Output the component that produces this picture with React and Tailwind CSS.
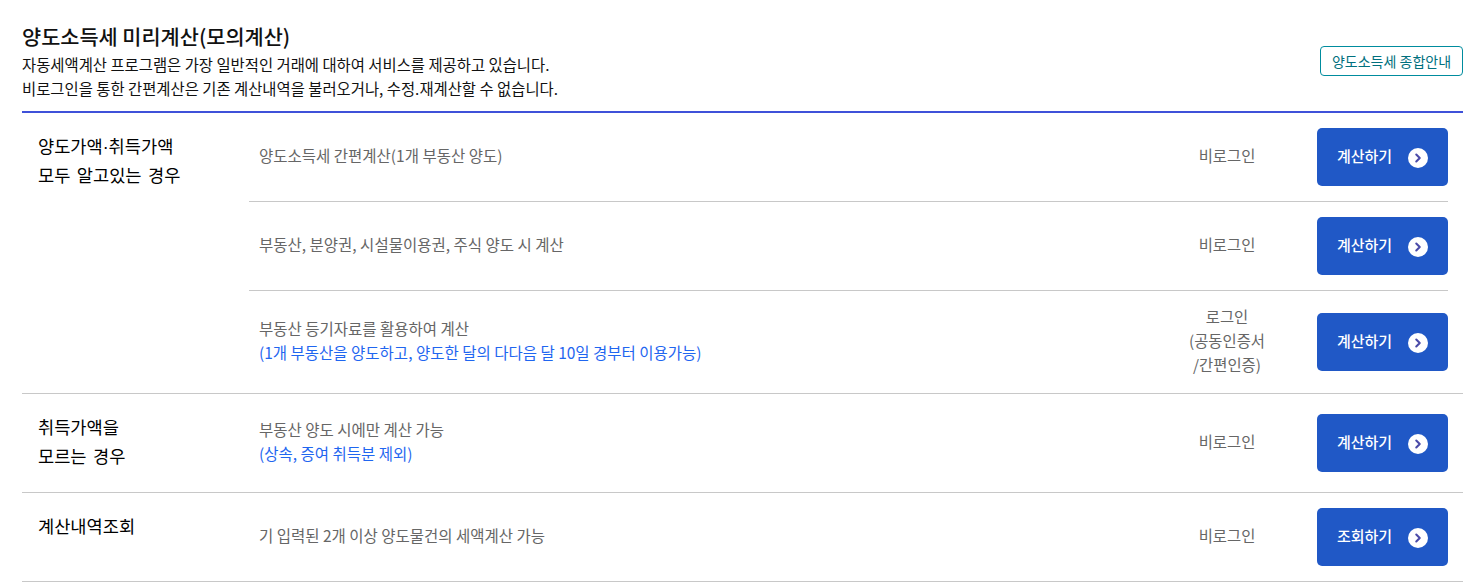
import { ChevronRight } from "lucide-react";

const font = { fontFamily: '"Noto Sans CJK KR", "Noto Sans", sans-serif' };

function ActionRow({ desc, note, login, label = "계산하기", className = "" }) {
  return (
    <div className={`flex items-center ${className}`}>
      <div className="flex-1 pl-[10px] -translate-y-[2px] text-[15.5px] leading-[24px] text-[#666666]">
        <p>{desc}</p>
        {note && <p className="text-[#1f66f0]">{note}</p>}
      </div>
      <div className="w-[100px] mr-[40px] -translate-y-[2px] text-center text-[15.4px] leading-[24px] text-[#666666]">
        {login}
      </div>
      <a className="flex items-center justify-center gap-[16px] w-[131px] h-[58px] rounded-[5px] bg-[#2058c6] text-[15px] font-medium text-white">
        <span className="pb-[2px]">{label}</span>
        <span className="flex items-center justify-center w-[20px] h-[20px] rounded-full bg-white mt-[1px]">
          <ChevronRight className="w-[14px] h-[14px] text-[#4a4aa8]" strokeWidth={3.5} />
        </span>
      </a>
    </div>
  );
}

export default function App() {
  return (
    <div className="min-h-[582px] bg-white pl-[22px] pr-[16px] pt-[21px]" style={font}>
      <div className="flex items-start justify-between h-[90px] border-b-2 border-[#3f51d9] box-content">
        <div>
          <h2 className="text-[20.8px] leading-[30px] font-medium text-[#111111]">양도소득세 미리계산(모의계산)</h2>
          <p className="mt-[1px] text-[15.4px] leading-[24px] text-[#111111]">자동세액계산 프로그램은 가장 일반적인 거래에 대하여 서비스를 제공하고 있습니다.</p>
          <p className="text-[15.4px] leading-[24px] text-[#111111]">비로그인을 통한 간편계산은 기존 계산내역을 불러오거나, 수정.재계산할 수 없습니다.</p>
        </div>
        <a className="flex items-center justify-center mt-[25px] w-[143px] h-[30px] rounded-[4px] border border-[#008c9e] text-[14px] text-[#00707e]">
          양도소득세 종합안내
        </a>
      </div>

      <div className="flex border-b border-[#c8c8c8]">
        <h3 className="w-[227px] pl-[16px] pt-[18px] text-[17.6px] leading-[29px] [word-spacing:2.5px] text-black">
          양도가액<span className="font-['Liberation_Sans'] leading-none">·</span>취득가액<br />모두 알고있는 경우
        </h3>
        <div className="flex-1 pr-[15px]">
          <ActionRow className="py-[15px] border-b border-[#c8c8c8]" desc="양도소득세 간편계산(1개 부동산 양도)" login="비로그인" />
          <ActionRow className="py-[15px] border-b border-[#c8c8c8]" desc="부동산, 분양권, 시설물이용권, 주식 양도 시 계산" login="비로그인" />
          <ActionRow
            className="py-[15px]"
            desc="부동산 등기자료를 활용하여 계산"
            note="(1개 부동산을 양도하고, 양도한 달의 다다음 달 10일 경부터 이용가능)"
            login={<>로그인<br />(공동인증서<br />/간편인증)</>}
          />
        </div>
      </div>

      <div className="flex border-b border-[#c8c8c8]">
        <h3 className="w-[227px] pl-[16px] pt-[18px] text-[17.6px] leading-[29px] [word-spacing:2.5px] text-black">
          취득가액을<br />모르는 경우
        </h3>
        <div className="flex-1 pr-[15px]">
          <ActionRow className="py-[20px]" desc="부동산 양도 시에만 계산 가능" note="(상속, 증여 취득분 제외)" login="비로그인" />
        </div>
      </div>

      <div className="flex border-b border-[#c8c8c8]">
        <h3 className="w-[227px] pl-[16px] pt-[18px] text-[17.6px] leading-[29px] [word-spacing:2.5px] text-black">
          계산내역조회
        </h3>
        <div className="flex-1 pr-[15px]">
          <ActionRow className="py-[15px]" desc="기 입력된 2개 이상 양도물건의 세액계산 가능" login="비로그인" label="조회하기" />
        </div>
      </div>
    </div>
  );
}
